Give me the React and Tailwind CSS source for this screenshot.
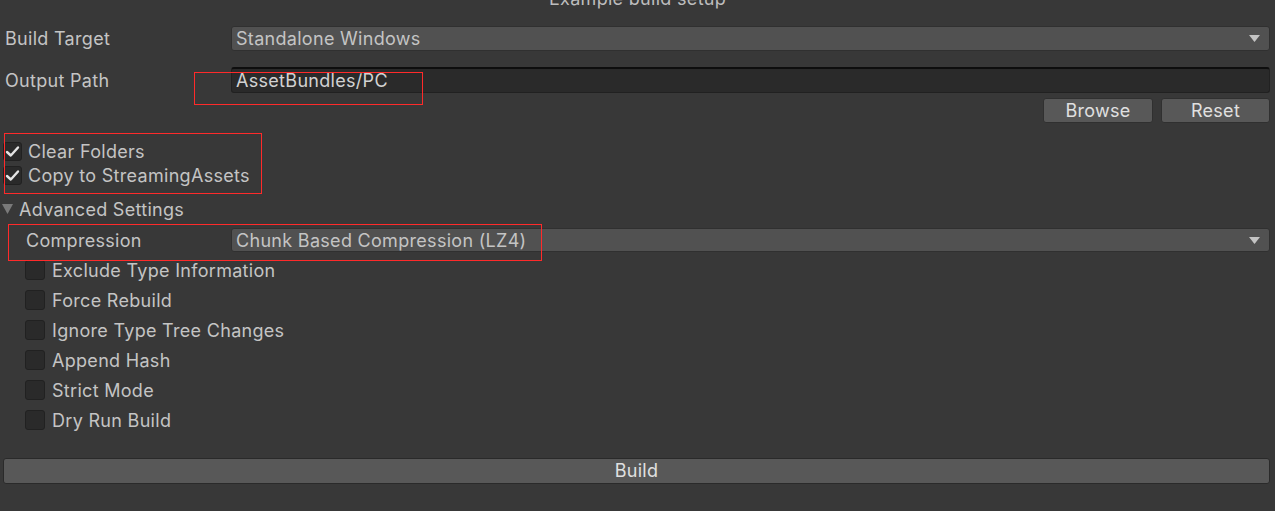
import { useState } from 'react';

const Arrow = () => (
  <svg width="11" height="7" viewBox="0 0 11 7" className="shrink-0">
    <path d="M0 0 H11 L5.5 7 Z" fill="#c4c4c4" />
  </svg>
);

const Check = () => (
  <svg width="15" height="13" viewBox="0 0 15 13">
    <path d="M2 7 L5.8 10.5 L13 2.5" fill="none" stroke="#e4e4e4" strokeWidth="2.4" strokeLinecap="round" strokeLinejoin="round" />
  </svg>
);

const Checkbox = ({ checked, onToggle, label, size = 'sm' }) => (
  <div className="flex items-center cursor-default" onClick={onToggle}>
    <div
      className={`${size === 'sm' ? 'w-[19px] h-[19px]' : 'w-[20px] h-[20px]'} shrink-0 rounded-[3px] bg-[#2a2a2a] border border-[#212121] flex items-center justify-center`}
    >
      {checked && <Check />}
    </div>
    <span className={size === 'sm' ? 'ml-[6px]' : 'ml-[7px]'}>{label}</span>
  </div>
);

const Dropdown = ({ value }) => (
  <div className="flex-1 h-full bg-[#515151] rounded-[3px] border border-[#303030] flex items-center justify-between pl-[4px] pr-[9px]">
    <span>{value}</span>
    <Arrow />
  </div>
);

const options = [
  'Exclude Type Information',
  'Force Rebuild',
  'Ignore Type Tree Changes',
  'Append Hash',
  'Strict Mode',
  'Dry Run Build',
];

export default function App() {
  const [clearFolders, setClearFolders] = useState(true);
  const [copyStreaming, setCopyStreaming] = useState(true);
  const [flags, setFlags] = useState(options.map(() => false));

  return (
    <div className="relative w-[1275px] h-[511px] overflow-hidden bg-[#383838] text-[#c4c4c4] text-[18px] tracking-[0.3px] font-[Inter,sans-serif]">
      <div className="h-[26px] overflow-hidden">
        <div className="-mt-[11px] leading-[20px] text-center text-[#bdbdbd]">Example build setup</div>
      </div>

      <div className="flex items-center h-[25px] pr-[5px]">
        <div className="w-[231px] pl-[5px] shrink-0">Build Target</div>
        <Dropdown value="Standalone Windows" />
      </div>

      <div className="flex items-center h-[26px] mt-[16px] pr-[5px]">
        <div className="w-[231px] pl-[5px] shrink-0">Output Path</div>
        <div className="flex-1 h-full bg-[#2a2a2a] rounded-[3px] border border-[#212121] border-t-[#0e0e0e] border-t-2 flex items-center pl-[4px]">
          <span className="text-[#d2d2d2]">AssetBundles/PC</span>
        </div>
      </div>

      <div className="flex justify-end gap-[8px] h-[25px] mt-[5px] pr-[5px]">
        <button className="w-[110px] h-full bg-[#585858] rounded-[3px] border border-[#303030] text-[#e0e0e0] leading-none">Browse</button>
        <button className="w-[109px] h-full bg-[#585858] rounded-[3px] border border-[#303030] text-[#e0e0e0] leading-none">Reset</button>
      </div>

      <div className="mt-[16px] pl-[3px] flex flex-col">
        <div className="h-[24px] flex items-center">
          <Checkbox checked={clearFolders} onToggle={() => setClearFolders(!clearFolders)} label="Clear Folders" />
        </div>
        <div className="h-[24px] flex items-center">
          <Checkbox checked={copyStreaming} onToggle={() => setCopyStreaming(!copyStreaming)} label="Copy to StreamingAssets" />
        </div>
      </div>

      <div className="mt-[10px] h-[24px] flex items-center pl-[2px]">
        <svg width="11" height="10" viewBox="0 0 11 10" className="shrink-0">
          <path d="M0 0 H11 L5.5 10 Z" fill="#7a7a7a" />
        </svg>
        <span className="ml-[6px]">Advanced Settings</span>
      </div>

      <div className="flex items-center h-[24px] mt-[7px] pr-[5px]">
        <div className="w-[231px] pl-[26px] shrink-0">Compression</div>
        <Dropdown value="Chunk Based Compression (LZ4)" />
      </div>

      <div className="mt-[3px] pl-[25px] flex flex-col">
        {options.map((label, i) => (
          <div key={label} className="h-[30px] flex items-center">
            <Checkbox
              size="md"
              checked={flags[i]}
              onToggle={() => setFlags(flags.map((f, j) => (j === i ? !f : f)))}
              label={label}
            />
          </div>
        ))}
      </div>

      <div className="mt-[22px] pl-[3px] pr-[5px]">
        <button className="w-full h-[26px] bg-[#585858] rounded-[3px] border border-[#2a2a2a] text-[#e0e0e0] leading-none">Build</button>
      </div>

      <div className="absolute left-[194px] top-[72px] w-[229px] h-[33px] border border-[#ff2a2a] pointer-events-none" />
      <div className="absolute left-[4px] top-[133px] w-[258px] h-[61px] border border-[#ff2a2a] pointer-events-none" />
      <div className="absolute left-[8px] top-[224px] w-[534px] h-[37px] border border-[#ff2a2a] pointer-events-none" />
    </div>
  );
}
